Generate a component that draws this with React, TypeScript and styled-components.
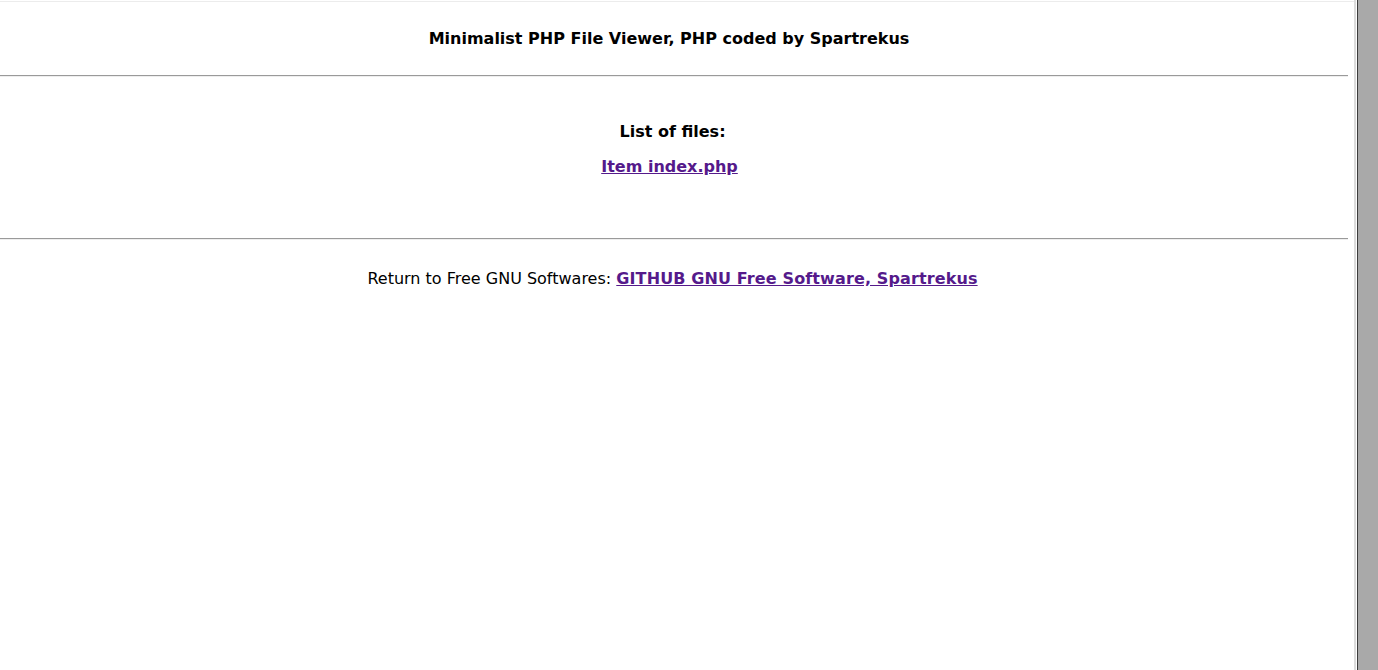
import styled, { createGlobalStyle } from 'styled-components'

const GlobalStyle = createGlobalStyle`
  html,
  body {
    margin: 0;
    padding: 0;
    background: #ffffff;
  }

  body {
    font-family: 'DejaVu Sans', Verdana, sans-serif;
    font-size: 16px;
    color: #000000;
  }
`

const Window = styled.div`
  display: flex;
  height: 100vh;
  overflow: hidden;
`

const Main = styled.main`
  flex: 1;
  padding-right: 6px;
  margin-top: 1px;
  border-top: 1px solid #ececec;
`

const Rule = styled.hr`
  margin: 0;
  border: none;
  border-top: 1px solid #9a9a9a;
  border-bottom: 1px solid #eeeeee;
  height: 0;
`

const Header = styled.header`
  height: 73px;
  padding-right: 10px;
  display: flex;
  align-items: center;
  justify-content: center;
`

const Title = styled.h1`
  margin: 0;
  font-size: 16px;
  font-weight: bold;
`

const FileList = styled.section`
  padding: 45px 3px 62px 0;
  display: flex;
  flex-direction: column;
  align-items: center;
  gap: 16px;
`

const ListTitle = styled.h2`
  margin: 0;
  font-size: 16px;
  font-weight: bold;
`

const Link = styled.a<{ $shift?: number; $spacing?: number }>`
  color: #551a8b;
  font-weight: bold;
  text-decoration: underline;
  margin-right: ${(p) => p.$shift || 0}px;
  letter-spacing: ${(p) => p.$spacing || 0}px;
`

const Footer = styled.footer`
  padding: 29px 3px 0 0;
  text-align: center;
`

const Gutter = styled.div`
  width: 24px;
  display: flex;
`

const Edge = styled.div`
  width: 2px;
  background: #dcdcdc;
  margin-right: 1px;
`

const Scrollbar = styled.div`
  flex: 1;
  border-left: 1px solid #3c3c3c;
  background: #a9a9a9;
`

export default function App() {
  return (
    <>
      <GlobalStyle />
      <Window>
        <Main>
          <Header>
            <Title>Minimalist PHP File Viewer, PHP coded by Spartrekus</Title>
          </Header>
          <Rule />
          <FileList>
            <ListTitle>List of files:</ListTitle>
            <Link href="#" $shift={6}>
              Item index.php
            </Link>
          </FileList>
          <Rule />
          <Footer>
            Return to Free GNU Softwares:{' '}
            <Link href="#" $spacing={0.12}>
              GITHUB GNU Free Software, Spartrekus
            </Link>
          </Footer>
        </Main>
        <Gutter>
          <Edge />
          <Scrollbar />
        </Gutter>
      </Window>
    </>
  )
}
